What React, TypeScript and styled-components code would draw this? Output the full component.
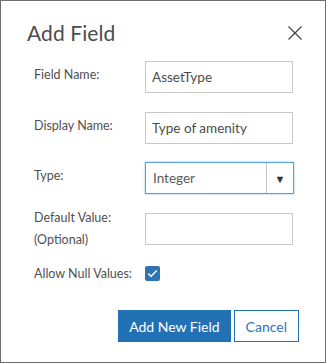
import styled, { createGlobalStyle } from "styled-components";

const GlobalStyle = createGlobalStyle`
  html, body {
    margin: 0;
    padding: 0;
    background: #fff;
  }
  body {
    font-family: Lato, "Open Sans", sans-serif;
  }
`;

const Dialog = styled.div`
  box-sizing: border-box;
  width: 326px;
  height: 363px;
  border: 1px solid #6e6e6e;
  background: #fff;
  display: flex;
  flex-direction: column;
`;

const Header = styled.div`
  display: flex;
  align-items: center;
  justify-content: space-between;
  padding: 19px 22px 0 26px;
  height: 25px;
`;

const Title = styled.h2`
  margin: 0;
  font-size: 21px;
  font-weight: 400;
  color: #4c4c4c;
  letter-spacing: 0.1px;
`;

const CloseButton = styled.button`
  border: none;
  background: none;
  padding: 0;
  width: 16px;
  height: 16px;
  display: flex;
  cursor: pointer;
`;

const Form = styled.div`
  display: grid;
  grid-template-columns: 111px 148px;
  grid-auto-rows: min-content;
  row-gap: 18.5px;
  padding: 16px 0 0 33px;
`;

const Label = styled.label<{ $top?: boolean; $shift?: number }>`
  font-size: 12.5px;
  color: #505050;
  line-height: 22px;
  display: flex;
  align-items: ${(p) => (p.$top ? "flex-start" : "center")};
  margin-top: ${(p) => (p.$top ? -6 : p.$shift ?? -4)}px;
  margin-bottom: ${(p) => (p.$top ? -6 : 0)}px;
`;

const Input = styled.input`
  box-sizing: border-box;
  width: 148px;
  height: 32px;
  border: 1px solid #c9c9c9;
  padding: 0 6px;
  font-family: Lato, "Open Sans", sans-serif;
  font-size: 13.5px;
  color: #4c4c4c;
  outline: none;
`;

const Select = styled.div`
  box-sizing: border-box;
  width: 149px;
  height: 32px;
  border: 1px solid #5a9fd6;
  box-shadow: 0 0 2px #8ec0ea;
  display: flex;
  align-items: stretch;
  font-size: 13.5px;
  color: #595959;
`;

const SelectValue = styled.span`
  flex: 1;
  display: flex;
  align-items: center;
  padding-left: 7px;
`;

const SelectArrow = styled.span`
  width: 26px;
  border-left: 1px solid #c4c4c4;
  display: flex;
  align-items: center;
  justify-content: center;
  font-size: 11px;
  color: #333;
`;

const CheckRow = styled.div`
  display: flex;
  align-items: center;
  height: 16px;
  margin-top: 2px;
`;

const Checkbox = styled.span`
  width: 15px;
  height: 15px;
  border-radius: 2px;
  background: #2f73b5;
  display: flex;
  align-items: center;
  justify-content: center;
`;

const Footer = styled.div`
  display: flex;
  justify-content: flex-end;
  gap: 3px;
  padding: 25px 26px 0 0;
`;

const Button = styled.button<{ $primary?: boolean }>`
  box-sizing: border-box;
  height: 32px;
  padding: 0 ${(p) => (p.$primary ? "10px" : "11px")};
  font-family: Lato, "Open Sans", sans-serif;
  font-size: 14px;
  border: 1px solid #2271b5;
  background: ${(p) => (p.$primary ? "#2271b5" : "#fff")};
  color: ${(p) => (p.$primary ? "#fff" : "#2f73b5")};
  cursor: pointer;
`;

export default function App() {
  return (
    <>
      <GlobalStyle />
      <Dialog>
        <Header>
          <Title>Add Field</Title>
          <CloseButton aria-label="Close">
            <svg width="16" height="16" viewBox="0 0 16 16">
              <path d="M1.5 1.5 L14.5 14.5 M14.5 1.5 L1.5 14.5" stroke="#444" strokeWidth="1.2" fill="none" />
            </svg>
          </CloseButton>
        </Header>
        <Form>
          <Label>Field Name:</Label>
          <Input defaultValue="AssetType" />
          <Label>Display Name:</Label>
          <Input defaultValue="Type of amenity" />
          <Label>Type:</Label>
          <Select>
            <SelectValue>Integer</SelectValue>
            <SelectArrow>▼</SelectArrow>
          </Select>
          <Label $top>
            Default Value:
            <br />
            (Optional)
          </Label>
          <Input defaultValue="" />
          <Label $shift={0}>Allow Null Values:</Label>
          <CheckRow>
            <Checkbox>
              <svg width="11" height="9" viewBox="0 0 11 9">
                <path d="M1.2 4.6 L4 7.3 L9.8 1.5" stroke="#fff" strokeWidth="1.4" fill="none" />
              </svg>
            </Checkbox>
          </CheckRow>
        </Form>
        <Footer>
          <Button $primary>Add New Field</Button>
          <Button>Cancel</Button>
        </Footer>
      </Dialog>
    </>
  );
}
